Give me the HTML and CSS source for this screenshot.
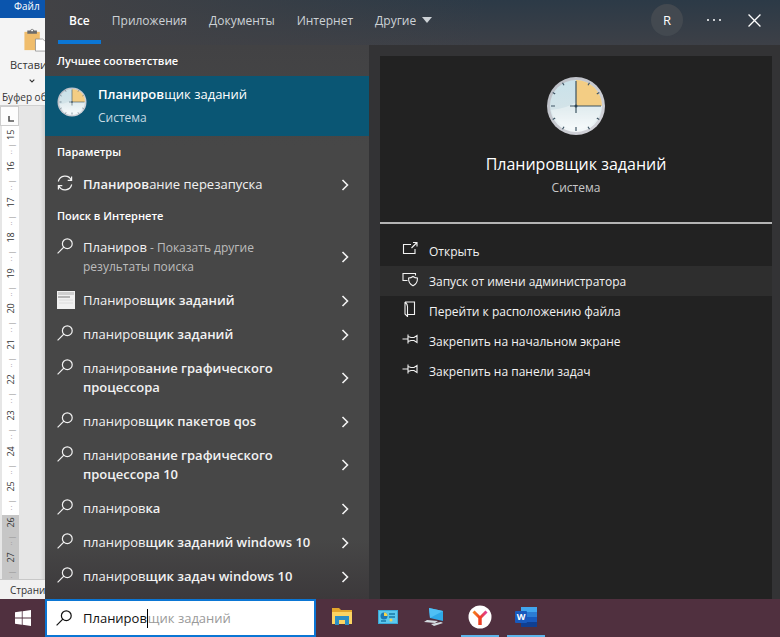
FILE: index.html
```html
<!DOCTYPE html>
<html lang="ru">
<head>
<meta charset="utf-8">
<title>Поиск</title>
<link rel="stylesheet" href="styles.css">
</head>
<body>
<svg class="defs" aria-hidden="true">
  <defs>
    <linearGradient id="face" x1="0" y1="0" x2="0" y2="1">
      <stop offset="0" stop-color="#c9e2ea"/><stop offset=".55" stop-color="#d3e3e8"/><stop offset="1" stop-color="#f6fafb"/>
    </linearGradient>
    <linearGradient id="rim" x1="0" y1="0" x2="1" y2="1">
      <stop offset="0" stop-color="#b9bdc4"/><stop offset="1" stop-color="#d6d6dc"/>
    </linearGradient>
    <linearGradient id="yandex" x1="0" y1="0" x2="1" y2="0">
      <stop offset="0" stop-color="#f58220"/><stop offset=".5" stop-color="#ef4023"/><stop offset="1" stop-color="#e0409a"/>
    </linearGradient>
    <symbol id="clock" viewBox="0 0 60 60">
      <circle cx="30" cy="30" r="29" fill="url(#rim)"/>
      <circle cx="30" cy="30" r="26" fill="url(#face)"/>
      <path d="M30 4A26 26 0 0 1 56 30H30Z" fill="#f3cd84"/>
      <path d="M5 34Q22 32 30 26L30 30H56A26 26 0 0 1 5 34Z" fill="#fff" opacity=".35"/>
      <g stroke="#3f5564" stroke-width="1.2">
        <path d="M30 51v4M5 30h4M18 50.800l-1.500 2.500M42 50.800l1.500 2.500M9.200 42l-2.500 1.500M50.800 42l2.500 1.500M9.200 18l-2.500-1.500M50.800 18l2.500-1.500M18 9.200l-1.500-2.500M42 9.200l1.500-2.500"/>
      </g>
      <path d="M30 5v32M24 30h31" stroke="#3b5361" stroke-width="1.200"/>
      <circle cx="30" cy="30" r="1.500" fill="#2f4553"/>
    </symbol>
    <symbol id="search" viewBox="0 0 16 16">
      <circle cx="10.300" cy="5.700" r="4.900" fill="none" stroke="currentColor" stroke-width="1.200"/>
      <path d="M6.800 9.200L.6 15.400" fill="none" stroke="currentColor" stroke-width="1.200"/>
    </symbol>
    <symbol id="chev" viewBox="0 0 8 12">
      <path d="M1.500 1L6.500 6L1.500 11" fill="none" stroke="currentColor" stroke-width="1.600"/>
    </symbol>
    <symbol id="pin" viewBox="0 0 16 16">
      <path d="M.5 8H6M6 3.500V12.500M6 5.500L9 6.500H12L15 4.500V11.500L12 9.500H9L6 10.500" fill="none" stroke="currentColor" stroke-width="1.100"/>
    </symbol>
  </defs>
</svg>

<main class="desktop">
  <section class="word" aria-label="Документ">
    <div class="word-title">Файл</div>
    <div class="ribbon">
      <svg class="paste" viewBox="0 0 24 26" aria-hidden="true">
        <path d="M1 4H17V23H1Z" fill="#f0bd6c"/><path d="M4 2.500H7Q9-1 11 2.500H14V6H4Z" fill="#6b6b6b"/><circle cx="9" cy="2.500" r="1" fill="#fff"/>
        <path d="M12.500 11.500H20L24 15V24H12.500Z" fill="#fff" stroke="#8a8a8a" stroke-width=".8"/>
      </svg>
      <span class="paste-label">Вставить</span>
      <svg class="mini" viewBox="0 0 6 4" aria-hidden="true"><path d="M.7.7L3 3L5.300.7" fill="none" stroke="#333" stroke-width="1.100"/></svg>
      <span class="group-label">Буфер обмена</span>
    </div>
    <div class="tabstop"><svg viewBox="0 0 6 6" aria-hidden="true"><path d="M1 0V5H6" fill="none" stroke="#555" stroke-width="1.600"/></svg></div>
    <div class="ruler">
      <span>15</span><span>16</span><span>17</span><span>18</span><span>19</span><span>20</span><span>21</span><span>22</span><span>23</span><span>24</span><span>25</span><span>26</span><span>27</span>
    </div>
    <div class="status">Страница</div>
  </section>

  <section class="panel" aria-label="Результаты поиска">
    <header class="tabs">
      <button class="tab active">Все</button>
      <button class="tab">Приложения</button>
      <button class="tab">Документы</button>
      <button class="tab">Интернет</button>
      <button class="tab more">Другие<svg viewBox="0 0 10 6" aria-hidden="true"><path d="M0 0H10L5 6Z" fill="currentColor"/></svg></button>
      <span class="spacer"></span>
      <button class="avatar">R</button>
      <button class="icon-btn" aria-label="Параметры"><svg class="dots" viewBox="0 0 14 4" aria-hidden="true"><g fill="currentColor"><circle cx="1" cy="2" r="1"/><circle cx="7" cy="2" r="1"/><circle cx="13" cy="2" r="1"/></g></svg></button>
      <button class="icon-btn" aria-label="Закрыть"><svg class="cross" viewBox="0 0 12 12" aria-hidden="true"><path d="M.5.5L11.500 11.500M11.500.5L.5 11.500" stroke="currentColor" stroke-width="1.200"/></svg></button>
    </header>

    <div class="content">
      <div class="results">
        <h2>Лучшее соответствие</h2>
        <button class="best">
          <svg class="best-icon" aria-hidden="true"><use href="#clock"/></svg>
          <span class="best-text"><span class="best-name"><b>Планиров</b>щик заданий</span><span class="best-sub">Система</span></span>
        </button>
        <h2>Параметры</h2>
        <button class="row">
          <svg class="ico" viewBox="0 0 16 16" aria-hidden="true"><path d="M1.300 6.500A6.900 6.900 0 0 1 14.300 5.200M14.700 9.500A6.900 6.900 0 0 1 1.700 10.800M14.600 1.500V5.400H10.700M1.400 14.500V10.600H5.300" fill="none" stroke="currentColor" stroke-width="1.200"/></svg>
          <span class="label"><b>Планиров</b>ание перезапуска</span>
          <svg class="chev" aria-hidden="true"><use href="#chev"/></svg>
        </button>
        <h2 class="tight">Поиск в Интернете</h2>
        <button class="row">
          <svg class="ico" aria-hidden="true"><use href="#search"/></svg>
          <span class="label">Планиров<small> - Показать другие<br>результаты поиска</small></span>
          <svg class="chev" aria-hidden="true"><use href="#chev"/></svg>
        </button>
        <button class="row">
          <svg class="ico thumb" viewBox="0 0 18 18" aria-hidden="true"><path d="M0 0H18V18H0Z" fill="#f1f1f1"/><path d="M1 1H17V4H1Z" fill="#cfcfcf"/><path d="M1 5H13V7H1Z" fill="#b5b5b5"/><path d="M2 9H16M2 12H16" stroke="#dcdcdc"/></svg>
          <span class="label">Планиров<b>щик заданий</b></span>
          <svg class="chev" aria-hidden="true"><use href="#chev"/></svg>
        </button>
        <button class="row">
          <svg class="ico" aria-hidden="true"><use href="#search"/></svg>
          <span class="label">планиров<b>щик заданий</b></span>
          <svg class="chev" aria-hidden="true"><use href="#chev"/></svg>
        </button>
        <button class="row">
          <svg class="ico" aria-hidden="true"><use href="#search"/></svg>
          <span class="label">планиров<b>ание графического<br>процессора</b></span>
          <svg class="chev" aria-hidden="true"><use href="#chev"/></svg>
        </button>
        <button class="row">
          <svg class="ico" aria-hidden="true"><use href="#search"/></svg>
          <span class="label">планиров<b>щик пакетов qos</b></span>
          <svg class="chev" aria-hidden="true"><use href="#chev"/></svg>
        </button>
        <button class="row">
          <svg class="ico" aria-hidden="true"><use href="#search"/></svg>
          <span class="label">планиров<b>ание графического<br>процессора 10</b></span>
          <svg class="chev" aria-hidden="true"><use href="#chev"/></svg>
        </button>
        <button class="row">
          <svg class="ico" aria-hidden="true"><use href="#search"/></svg>
          <span class="label">планиров<b>ка</b></span>
          <svg class="chev" aria-hidden="true"><use href="#chev"/></svg>
        </button>
        <button class="row">
          <svg class="ico" aria-hidden="true"><use href="#search"/></svg>
          <span class="label">планиров<b>щик заданий windows 10</b></span>
          <svg class="chev" aria-hidden="true"><use href="#chev"/></svg>
        </button>
        <button class="row">
          <svg class="ico" aria-hidden="true"><use href="#search"/></svg>
          <span class="label">планиров<b>щик задач windows 10</b></span>
          <svg class="chev" aria-hidden="true"><use href="#chev"/></svg>
        </button>
      </div>

      <div class="preview">
        <div class="card">
          <div class="hero">
            <svg class="hero-icon" aria-hidden="true"><use href="#clock"/></svg>
            <h1>Планировщик заданий</h1>
            <p>Система</p>
          </div>
          <div class="actions">
            <button class="action"><svg viewBox="0 0 16 16" aria-hidden="true"><path d="M9 3.500H1.500V12.500H13V8M9.500 7L14.500 2M11 1.500H15V5.500" fill="none" stroke="currentColor" stroke-width="1.100"/></svg>Открыть</button>
            <button class="action selected"><svg viewBox="0 0 16 16" aria-hidden="true"><path d="M5.500 9.500H1V2.500H13.500V4.500M11 5.500Q12.800 7 15.400 7Q15.800 12.500 11 14.800Q6.200 12.500 6.600 7Q9.200 7 11 5.500Z" fill="none" stroke="currentColor" stroke-width="1.100"/></svg>Запуск от имени администратора</button>
            <button class="action"><svg viewBox="0 0 16 16" aria-hidden="true"><path d="M3 1H12.500V13.500H6M3 1V13L5.500 15.500V5.500Q5.500 3 3 1" fill="none" stroke="currentColor" stroke-width="1.100"/></svg>Перейти к расположению файла</button>
            <button class="action"><svg aria-hidden="true"><use href="#pin"/></svg>Закрепить на начальном экране</button>
            <button class="action"><svg aria-hidden="true"><use href="#pin"/></svg>Закрепить на панели задач</button>
          </div>
        </div>
      </div>
    </div>
  </section>
</main>

<footer class="taskbar">
  <button class="start" aria-label="Пуск"><svg viewBox="0 0 16 16" aria-hidden="true"><path d="M0 2.300L6.800 1.300V7.600H0ZM7.600 1.200L16 0V7.600H7.600ZM0 8.400H6.800V14.700L0 13.700ZM7.600 8.400H16V16L7.600 14.800Z" fill="#fff"/></svg></button>
  <label class="searchbox">
    <svg class="ico" aria-hidden="true"><use href="#search"/></svg>
    <span class="field"><input type="text" value="Планиров" size="1" aria-label="Поиск"><span class="typed" aria-hidden="true">Планиров</span></span><span class="hint">щик заданий</span>
  </label>
  <nav class="apps">
    <button class="app" aria-label="Проводник"><svg viewBox="0 0 22 20" aria-hidden="true"><path d="M1 1H8L10 3H21V17H1Z" fill="#e3a62c"/><path d="M1 5H21V17H1Z" fill="#fcd462"/><path d="M4 9H18V18H14V13H8V18H4Z" fill="#2d8fc4"/></svg></button>
    <button class="app" aria-label="Панель управления"><svg viewBox="0 0 22 20" aria-hidden="true"><path d="M1 3H21V17H1Z" fill="#3aa9d8"/><path d="M2 4H20V16H2Z" fill="#5cc8ee"/><circle cx="7" cy="9" r="3.500" fill="#1d78b3"/><path d="M7 9V5.500A3.500 3.500 0 0 1 10.500 9Z" fill="#f5d34c"/><path d="M12 7H18M12 10H18M4 14H9" stroke="#187aa8" stroke-width="1.500"/><circle cx="14" cy="13" r="1.500" fill="#f0d154"/></svg></button>
    <button class="app" aria-label="Компьютер"><svg viewBox="0 0 22 20" aria-hidden="true"><path d="M6 1L20 4V14L7 11Z" fill="#2fa9e8"/><path d="M6 1L20 4L7 11Z" fill="#4fc0f5"/><path d="M4 13L15 14L12 16L1 15ZM8 17L18 15L20 16L11 19Z" fill="#d5dde2"/></svg></button>
    <button class="app open" aria-label="Браузер"><svg class="round" viewBox="0 0 24 24" aria-hidden="true"><circle cx="12" cy="12" r="11.500" fill="#fff"/><path d="M5.500 6.500L12 13L18.500 6.500M12 12V20" fill="none" stroke="url(#yandex)" stroke-width="3"/><path d="M12 12.500V20" stroke="#ef4023" stroke-width="3"/></svg></button>
    <button class="app open" aria-label="Word"><svg class="round" viewBox="0 0 24 24" aria-hidden="true"><path d="M7 2H23V7H7Z" fill="#41a5ee"/><path d="M7 7H23V12H7Z" fill="#2b7cd3"/><path d="M7 12H23V17H7Z" fill="#185abd"/><path d="M7 17H23V22H7Z" fill="#103f91"/><rect x="1" y="6" width="12" height="12" rx="1" fill="#185abd"/><text x="7" y="15" text-anchor="middle" class="w">W</text></svg></button>
  </nav>
</footer>
</body>
</html>
```
FILE: styles.css
```css
* { box-sizing: border-box; }
body {
  margin: 0;
  height: 100vh;
  display: flex;
  flex-direction: column;
  overflow: hidden;
  font: 13px/19px "Open Sans", "Noto Sans", sans-serif;
  color: #f2f2f2;
  background: #e6e6e6;
}
button {
  border: 0;
  padding: 0;
  background: none;
  color: inherit;
  font: inherit;
  text-align: left;
}
b { font-weight: 600; }
svg { display: block; flex: none; }
.defs { position: absolute; width: 0; height: 0; }
.desktop { flex: 1; display: flex; min-height: 0; }

/* Document window */
.word {
  width: 45px;
  flex: none;
  display: flex;
  flex-direction: column;
  overflow: hidden;
  white-space: nowrap;
  color: #333;
  font-size: 10px;
  background: linear-gradient(90deg, #e6e6e6 40px, #cfcfcf);
}
.word > * { flex: none; }
.word-title {
  height: 18px;
  padding-left: 14px;
  line-height: 12px;
  color: #fff;
  background: #0b55ad;
}
.ribbon {
  height: 88px;
  padding-top: 10px;
  display: flex;
  flex-direction: column;
  background: #f4f4f4;
  border-bottom: 1px solid #d0d0d0;
}
.paste { width: 24px; height: 25px; margin-left: 23px; }
.paste-label { padding-left: 10px; margin-top: 3px; font-size: 11px; line-height: 18px; }
.mini { width: 6px; height: 4px; margin: 5px 0 5px 29px; }
.group-label { padding-left: 2px; line-height: 18px; }
.tabstop {
  width: 19px;
  height: 20px;
  padding: 9px 0 0 7px;
  background: #fdfdfd;
  border: 1px solid #cdcdcd;
}
.tabstop svg { width: 6px; height: 6px; }
.word .ruler {
  flex: 1 1 0;
  min-height: 0;
  width: 17px;
  margin-left: 2px;
  display: flex;
  flex-direction: column;
  background: linear-gradient(#fff calc(100% - 64px), #c6c6c6 0);
}
.ruler span {
  flex: 1 1 0;
  min-height: 0;
  display: flex;
  align-items: center;
  justify-content: space-between;
  writing-mode: vertical-rl;
  transform: rotate(180deg);
  line-height: 17px;
  font-size: 9px;
}
.ruler span:first-child { flex: 0 0 26px; }
.ruler span::before { content: "· |"; color: #999; font-size: 8px; }
.ruler span::after { content: "·"; color: #999; font-size: 8px; }
.ruler span:first-child::after { content: ""; }
.status {
  height: 20px;
  padding-left: 10px;
  line-height: 20px;
  background: #f1f1f1;
  border-top: 1px solid #c8c8c8;
}

/* Search panel */
.panel { flex: 1; min-width: 0; display: flex; flex-direction: column; background: #333335; }
.tabs {
  height: 45px;
  flex: none;
  padding: 0 6px 0 13px;
  display: flex;
  font-size: 12px;
  color: #cdd2d6;
  background: linear-gradient(90deg, #424245, transparent 60%), linear-gradient(#2c3a47, #3d4047);
}
.tab {
  height: 44px;
  padding: 0 11px;
  display: flex;
  align-items: center;
  border-bottom: 4px solid transparent;
}
.tab.active { color: #fff; font-weight: 600; border-bottom-color: #0b76d4; }
.more { gap: 6px; }
.more svg { width: 10px; height: 6px; }
.spacer { flex: 1; }
.avatar {
  width: 32px;
  height: 32px;
  margin: 4px 11px 0 0;
  border-radius: 50%;
  font-size: 13px;
  text-align: center;
  color: #fff;
  background: #434950;
}
.icon-btn { width: 40px; height: 40px; display: grid; place-items: center; color: #fff; }
.dots { width: 14px; height: 4px; }
.cross { width: 13px; height: 13px; }
.content { flex: 1; display: flex; min-height: 0; }
.results {
  width: 324px;
  flex: none;
  background: linear-gradient(#424244, #474747 100px, #474747 calc(100% - 60px), #3c393b);
}
h2 {
  margin: 0;
  padding-left: 12px;
  font-size: 11px;
  line-height: 31px;
  font-weight: 600;
  color: #fff;
}
.tight { line-height: 29px; }
.best {
  width: 100%;
  height: 60px;
  padding: 0 12px;
  display: flex;
  align-items: center;
  gap: 11px;
  background: #0a5674;
}
.best-icon { width: 30px; height: 30px; margin-bottom: 9px; }
.best-text { display: flex; flex-direction: column; gap: 4px; }
.best-name { color: #fff; }
.best-sub { font-size: 12px; color: #c5d9e2; }
.row {
  width: 100%;
  padding: 8px 20px 7px 12px;
  display: flex;
  align-items: center;
}
.ico { width: 16px; height: 16px; align-self: flex-start; }
.row .ico { margin-right: 10px; }
.row .thumb { width: 18px; height: 18px; margin-right: 8px; }
.label { flex: 1; }
small { font-size: 12px; color: #bdbdbd; }
.chev { width: 8px; height: 12px; }

/* Preview */
.preview { flex: 1; min-width: 0; padding: 11px 8px 0 11px; display: flex; }
.card { flex: 1; background: #222; }
.hero {
  height: 168px;
  padding-top: 20px;
  display: flex;
  flex-direction: column;
  align-items: center;
  border-bottom: 2px solid #b4b4b4;
}
.hero-icon { width: 60px; height: 60px; }
h1 { margin: 16px 0 2px; font-size: 16px; line-height: 24px; font-weight: 400; color: #fff; }
p { margin: 0; font-size: 12px; line-height: 20px; color: #c8c8c8; }
.actions { padding-top: 12px; }
.action {
  width: 100%;
  height: 30px;
  padding-left: 22px;
  display: flex;
  align-items: center;
  gap: 11px;
  font-size: 12px;
}
.action svg { width: 16px; height: 16px; margin-bottom: 4px; }
.selected { background: #2e2e2e; }

/* Taskbar */
.taskbar { height: 38px; flex: none; display: flex; background: #50303f; }
.start { width: 45px; display: grid; place-items: center; }
.start svg { width: 16px; height: 16px; }
.searchbox {
  width: 271px;
  padding: 0 9px;
  display: flex;
  align-items: center;
  color: #111;
  background: #fff;
  border: 2px solid #0b76d4;
}
.searchbox .ico { align-self: center; margin-right: 11px; }
.field { display: grid; border-right: 1px solid #000; }
.field > * { grid-area: 1 / 1; }
.field input {
  width: 100%;
  min-width: 0;
  padding: 0;
  border: 0;
  outline: 0;
  color: #111;
  font: inherit;
  background: none;
}
.typed { visibility: hidden; }
.hint { color: #999; }
.apps { display: flex; padding-left: 7px; gap: 8px; }
.app { width: 38px; display: grid; place-items: center; border-bottom: 2px solid transparent; }
.app svg { width: 22px; height: 20px; }
.app .round { width: 24px; height: 24px; }
.app.open { border-bottom-color: #5eb4ea; }
.w { font: 700 9px "Open Sans", sans-serif; fill: #fff; }
```
